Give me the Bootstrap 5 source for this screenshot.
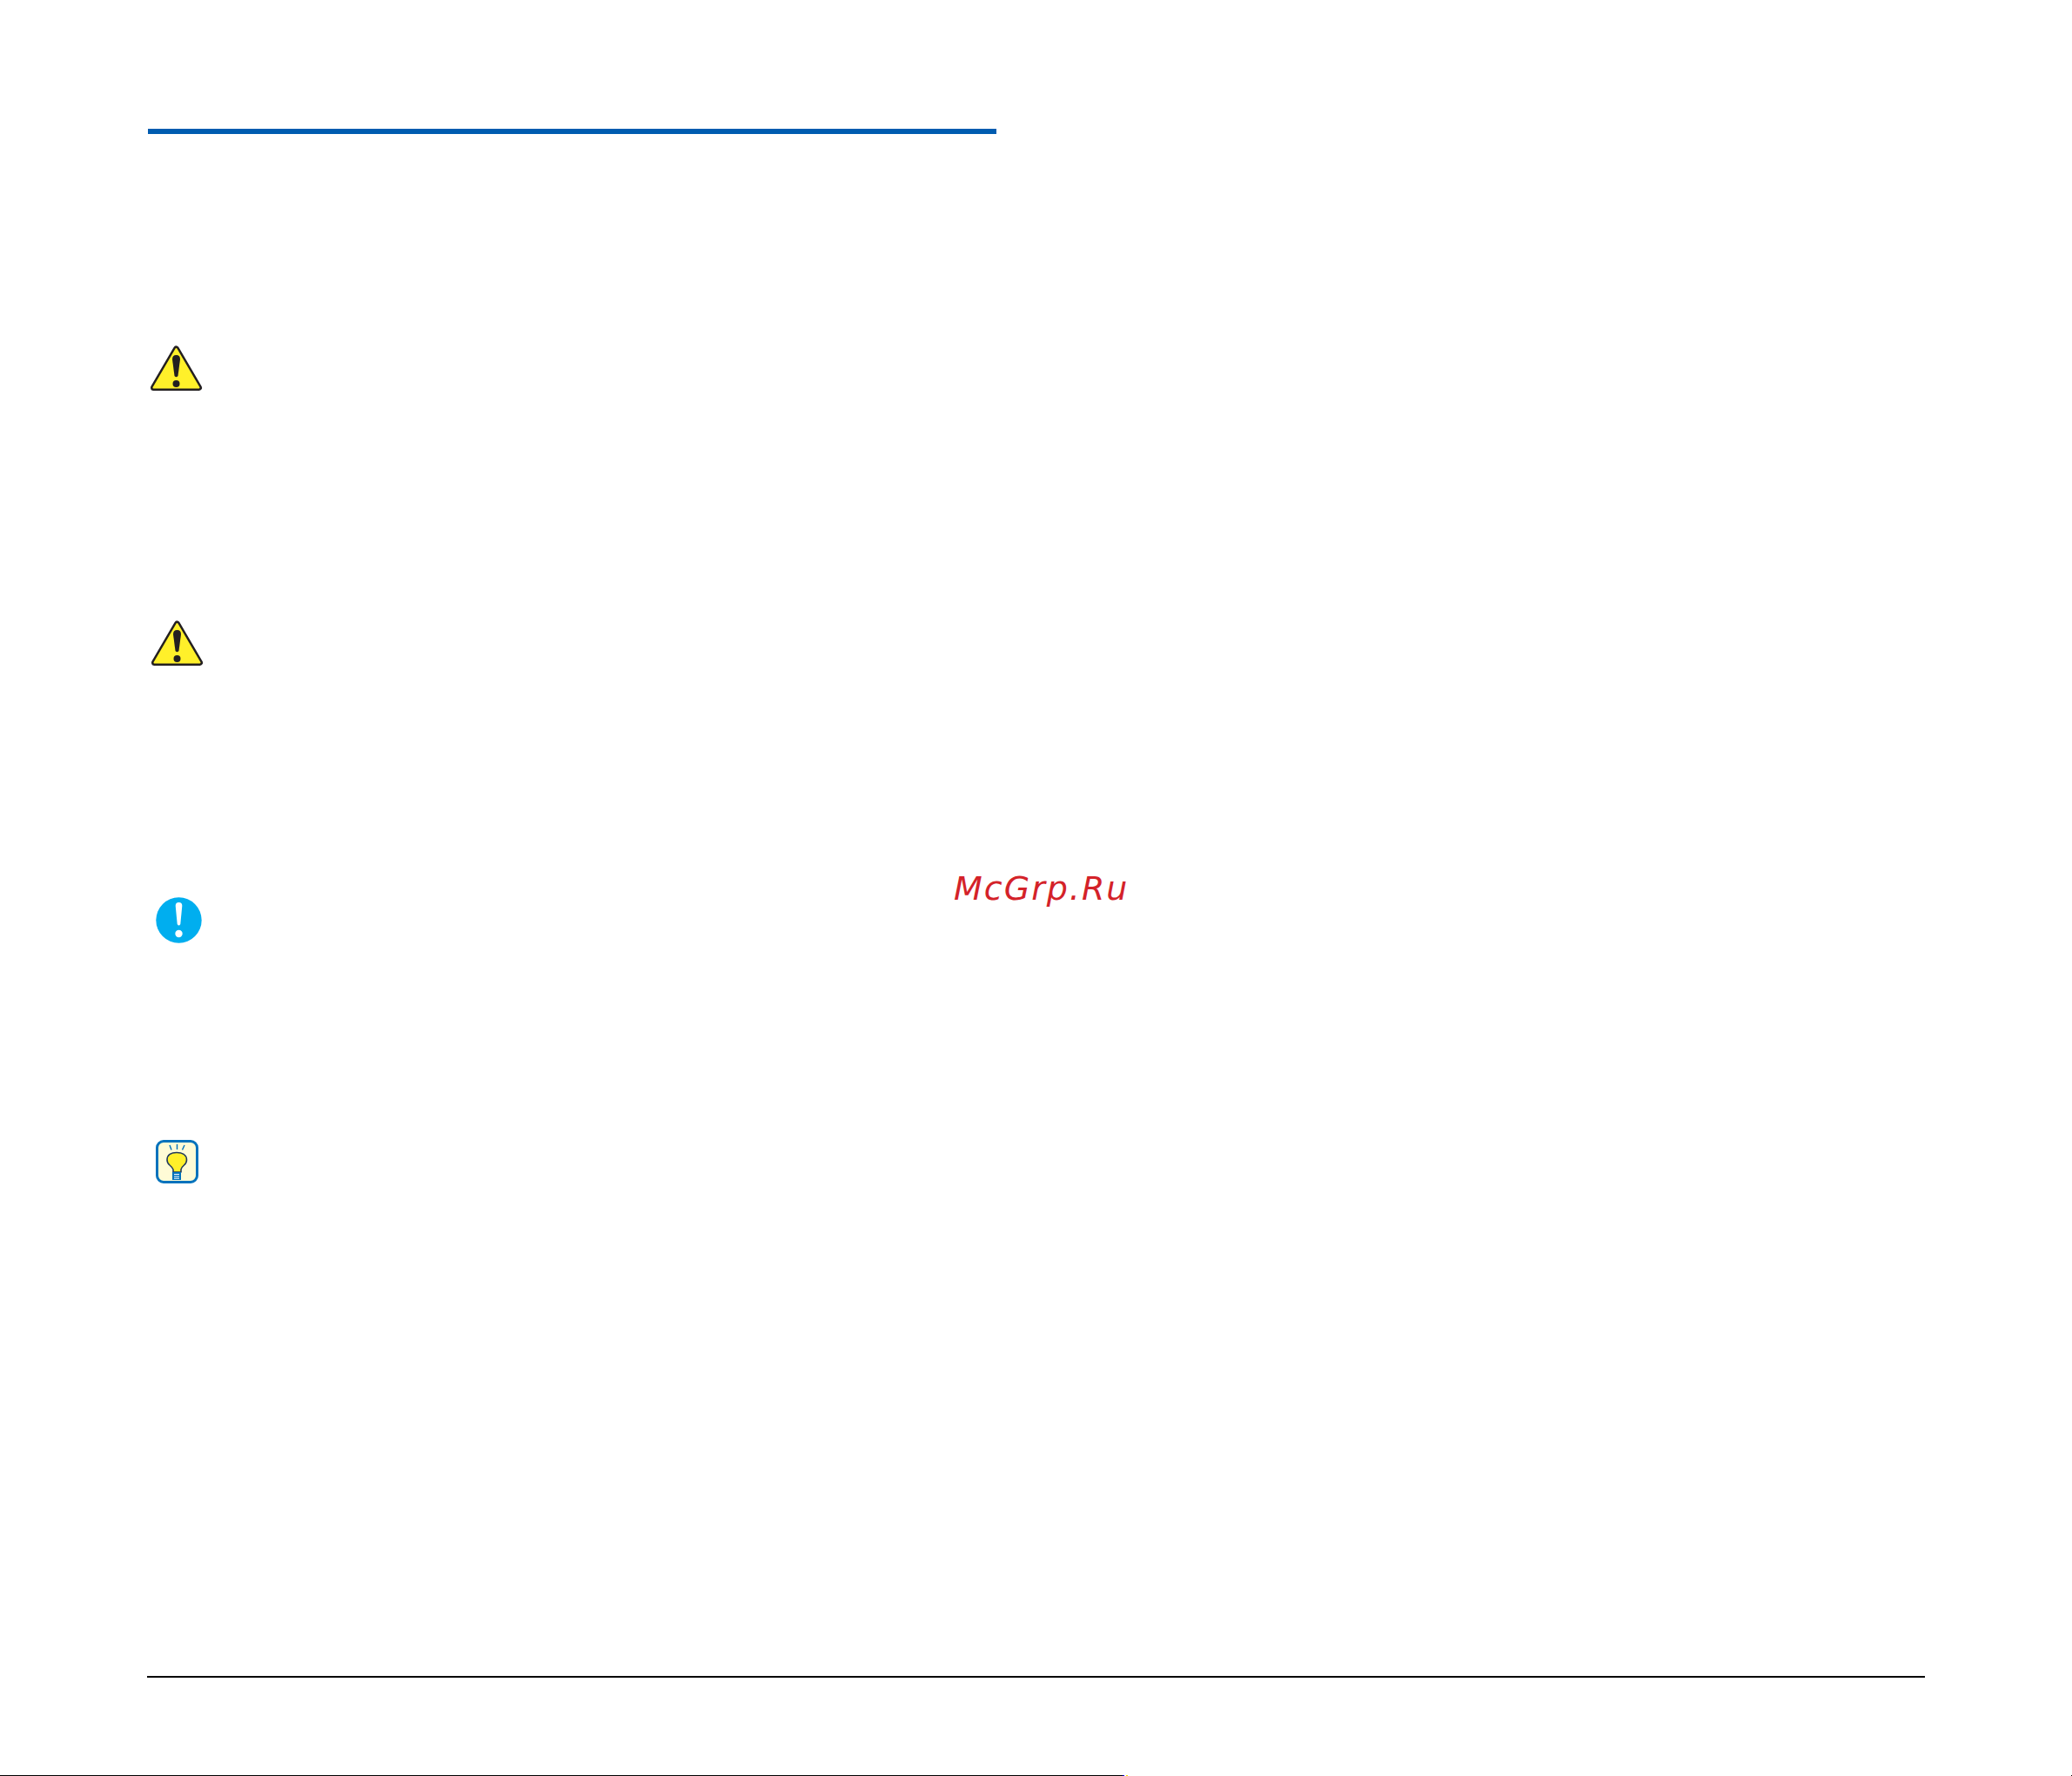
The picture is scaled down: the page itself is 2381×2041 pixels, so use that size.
<!DOCTYPE html>
<html lang="en">
<head>
<meta charset="utf-8">
<title>McGrp.Ru</title>
<link href="https://cdn.jsdelivr.net/npm/bootstrap@5.3.0/dist/css/bootstrap.min.css" rel="stylesheet">
<style>
html, body { background: #fff; overflow: hidden; }
.sheet { position: relative; height: 2041px; padding-top: 148px; }
.head-rule { height: 6px; width: 975px; margin-left: 170px; background: #005cb0; }
.icon-slot { display: block; }
.slot-warn-a { margin: 242px 0 0 172px; }
.slot-warn-b { margin: 262px 0 0 173px; }
.slot-info { margin: 265px 0 0 179px; }
.slot-tip { margin: 226px 0 0 179px; }
.foot-rule { height: 2px; width: 2043px; margin: 566px 0 0 169px; background: #000; }
.edge-strip { margin-top: 112px; height: 1px; }
.edge-line { width: 1290px; background: #000; }
.edge-blue { width: 2px; background: #0000c8; }
.edge-white { width: 2px; }
.edge-yellow { width: 2px; background: #f5e600; }
.edge-dot { width: 1px; background: #000; }
.watermark { position: absolute; left: 1096px; top: 1001px; font: oblique 400 38px/1.1 "DejaVu Sans", sans-serif; letter-spacing: 2px; color: #d42229; white-space: nowrap; }
</style>
</head>
<body>
<div class="sheet">
  <div class="head-rule"></div>

  <svg class="icon-slot slot-warn-a" width="62" height="54" viewBox="0 0 62 54" role="img" aria-label="Warning">
    <path d="M30.5 5 L56.5 49.5 L4.5 49.5 Z" fill="#231f20" stroke="#231f20" stroke-width="7" stroke-linejoin="round"/>
    <path d="M30.5 5 L56.5 49.5 L4.5 49.5 Z" fill="#fff02a" stroke="#fff02a" stroke-width="2" stroke-linejoin="round"/>
    <path d="M26 17 Q26 12 30.5 12 Q35 12 35 17 L32.5 36 Q30.5 38.5 28.5 36 Z" fill="#231f20"/>
    <circle cx="30.5" cy="45" r="4" fill="#231f20"/>
  </svg>

  <svg class="icon-slot slot-warn-b" width="62" height="54" viewBox="0 0 62 54" role="img" aria-label="Warning">
    <path d="M30.5 5 L56.5 49.5 L4.5 49.5 Z" fill="#231f20" stroke="#231f20" stroke-width="7" stroke-linejoin="round"/>
    <path d="M30.5 5 L56.5 49.5 L4.5 49.5 Z" fill="#fff02a" stroke="#fff02a" stroke-width="2" stroke-linejoin="round"/>
    <path d="M26 17 Q26 12 30.5 12 Q35 12 35 17 L32.5 36 Q30.5 38.5 28.5 36 Z" fill="#231f20"/>
    <circle cx="30.5" cy="45" r="4" fill="#231f20"/>
  </svg>

  <svg class="icon-slot slot-info" width="53" height="53" viewBox="0 0 53 53" role="img" aria-label="Important">
    <circle cx="26.5" cy="26.5" r="26.2" fill="#00aeef"/>
    <path d="M22.7 10 Q22.7 6 26.5 6 Q30.3 6 30.3 10 L28.3 31 Q26.5 34 24.7 31 Z" fill="#fff"/>
    <circle cx="26.5" cy="42" r="4.2" fill="#fff"/>
  </svg>

  <svg class="icon-slot slot-tip" width="50" height="50" viewBox="0 0 50 50" role="img" aria-label="Hint">
    <rect x="1.5" y="1.5" width="46" height="47" rx="7.5" fill="#fffbd6" stroke="#0072bc" stroke-width="3"/>
    <path d="M16 6 L18 11.5 M24.5 5 L24.5 11 M33 6 L30.5 11.5" stroke="#0072bc" stroke-width="1.4" fill="none"/>
    <path d="M20 37 L20 34 Q18.5 31 16 29 Q13 26.5 13 23 C13 17 18 14.5 24 14.5 C30 14.5 35.5 17 35.5 23 Q35.5 26.5 32.5 29 Q30 31 29 34 L29 37 Z" fill="#fff02a" stroke="#223a5c" stroke-width="1.6" stroke-linejoin="round"/>
    <rect x="19" y="37" width="10" height="9" fill="#0072bc"/>
    <path d="M21 39.5 H27 M21 42 H27 M21 44.2 H27" stroke="#fff" stroke-width="1"/>
  </svg>

  <div class="foot-rule"></div>

  <div class="edge-strip d-flex">
    <div class="edge-line"></div>
    <div class="edge-blue"></div>
    <div class="edge-white"></div>
    <div class="edge-yellow"></div>
    <div class="edge-dot ms-auto"></div>
  </div>

  <div class="watermark">McGrp.Ru</div>
</div>
<script src="https://cdn.jsdelivr.net/npm/bootstrap@5.3.0/dist/js/bootstrap.bundle.min.js"></script>
</body>
</html>
